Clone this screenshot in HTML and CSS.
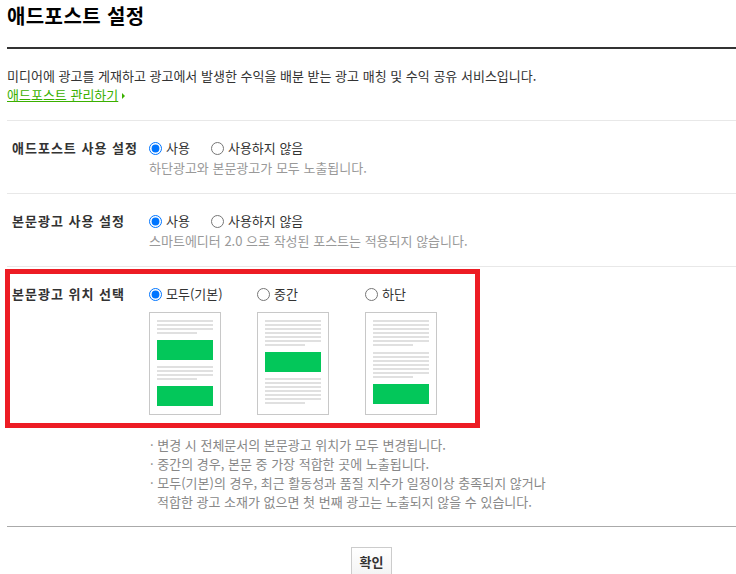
FILE: index.html
```html
<!DOCTYPE html>
<html lang="ko">
<head>
  <meta charset="UTF-8" />
  <title>애드포스트 설정</title>
  <link rel="stylesheet" href="styles.css">
</head>
<body>
  <div class="page">
    <h1 class="title">애드포스트 설정</h1>

    <div class="intro">
      <p>미디어에 광고를 게재하고 광고에서 발생한 수익을 배분 받는 광고 매칭 및 수익 공유 서비스입니다.</p>
      <a href="#" class="manage-link">애드포스트 관리하기</a><span class="arrow"></span>
    </div>

    <div class="row">
      <div class="row-label">애드포스트 사용 설정</div>
      <div class="row-body">
        <div class="options">
          <label class="option"><input type="radio" name="use" checked> 사용</label>
          <label class="option"><input type="radio" name="use"> 사용하지 않음</label>
        </div>
        <p class="help">하단광고와 본문광고가 모두 노출됩니다.</p>
      </div>
    </div>

    <div class="row">
      <div class="row-label">본문광고 사용 설정</div>
      <div class="row-body">
        <div class="options">
          <label class="option"><input type="radio" name="body" checked> 사용</label>
          <label class="option"><input type="radio" name="body"> 사용하지 않음</label>
        </div>
        <p class="help">스마트에디터 2.0 으로 작성된 포스트는 적용되지 않습니다.</p>
      </div>
    </div>

    <div class="row row-position">
      <div class="row-label">본문광고 위치 선택</div>
      <div class="positions">
        <div class="position">
          <label class="option"><input type="radio" name="pos" checked> 모두(기본)</label>
          <div class="thumb">
            <div class="lines"><i></i><i></i><i></i><i class="short"></i></div>
            <div class="ad"></div>
            <div class="lines"><i></i><i></i><i></i><i class="short"></i></div>
            <div class="ad"></div>
          </div>
        </div>
        <div class="position">
          <label class="option"><input type="radio" name="pos"> 중간</label>
          <div class="thumb">
            <div class="lines"><i></i><i></i><i></i><i></i><i></i><i></i><i class="short"></i></div>
            <div class="ad"></div>
            <div class="lines"><i></i><i></i><i></i><i></i><i></i><i></i><i class="short"></i></div>
          </div>
        </div>
        <div class="position">
          <label class="option"><input type="radio" name="pos"> 하단</label>
          <div class="thumb">
            <div class="lines"><i></i><i></i><i></i><i></i><i></i><i></i><i class="short"></i></div>
            <div class="lines"><i></i><i></i><i></i><i></i><i></i><i></i><i class="short"></i></div>
            <div class="ad"></div>
          </div>
        </div>
      </div>
    </div>

    <ul class="notes">
      <li>· 변경 시 전체문서의 본문광고 위치가 모두 변경됩니다.</li>
      <li>· 중간의 경우, 본문 중 가장 적합한 곳에 노출됩니다.</li>
      <li>· 모두(기본)의 경우, 최근 활동성과 품질 지수가 일정이상 충족되지 않거나<br>적합한 광고 소재가 없으면 첫 번째 광고는 노출되지 않을 수 있습니다.</li>
    </ul>

    <div class="actions">
      <button type="button" class="btn">확인</button>
    </div>
  </div>
</body>
</html>
```

FILE: styles.css
```css
* {
  box-sizing: border-box;
  margin: 0;
  padding: 0;
}

body {
  background: #fff;
  color: #333;
  font-family: "Noto Sans CJK KR", "Noto Sans", sans-serif;
  font-size: 13px;
}

.page {
  width: 736px;
  padding-left: 7px;
}

.title {
  font-size: 20px;
  line-height: 26px;
  font-weight: bold;
  color: #000;
  letter-spacing: 0.4px;
  padding: 3px 0 18px;
  border-bottom: 2px solid #333;
}

.intro {
  padding: 17px 0 16px;
  line-height: 19px;
  border-bottom: 1px solid #e8e8e8;
}

.manage-link {
  color: #3ab000;
  text-decoration: underline;
}

.arrow {
  display: inline-block;
  margin-left: 4px;
  border-left: 3px solid #3ab000;
  border-top: 3px solid transparent;
  border-bottom: 3px solid transparent;
  vertical-align: middle;
}

.row {
  display: grid;
  grid-template-columns: 137px 1fr;
  padding: 17px 0 15px 5px;
  border-bottom: 1px solid #e8e8e8;
  line-height: 20px;
}

.row-label {
  font-weight: bold;
  color: #333;
  letter-spacing: 1px;
}

.options {
  display: flex;
  gap: 21px;
}

.option {
  display: flex;
  align-items: center;
  gap: 4px;
  color: #333;
}

.option input {
  width: 13px;
  height: 13px;
  margin: 0;
}

.help {
  color: #999;
}

.row-position {
  width: 475px;
  margin: 2px 0 0 -2px;
  padding: 10px 0 8px 2px;
  border: 5px solid #ed1c24;
}

.positions {
  display: grid;
  grid-template-columns: repeat(3, 108px);
}

.thumb {
  width: 72px;
  height: 103px;
  margin-top: 8px;
  padding: 7px;
  border: 1px solid #c8c8c8;
  display: flex;
  flex-direction: column;
  gap: 6px;
}

.lines {
  display: flex;
  flex-direction: column;
  gap: 2px;
}

.lines i {
  display: block;
  height: 2px;
  background: #e0e0e0;
}

.lines i.short {
  width: 40px;
}

.ad {
  height: 20px;
  background: #03c75a;
}

.notes {
  list-style: none;
  margin: 7px 0 0 143px;
  padding: 0 0 15px 7px;
  color: #888;
  line-height: 19px;
}

.notes li {
  text-indent: -7px;
}

.actions {
  border-top: 1px solid #aaa;
  padding-top: 20px;
  text-align: center;
}

.btn {
  font-family: inherit;
  font-size: 13px;
  font-weight: bold;
  color: #333;
  height: 28px;
  padding: 0 8px;
  background: linear-gradient(#fff, #f4f4f4);
  border: 1px solid #ccc;
}
```
